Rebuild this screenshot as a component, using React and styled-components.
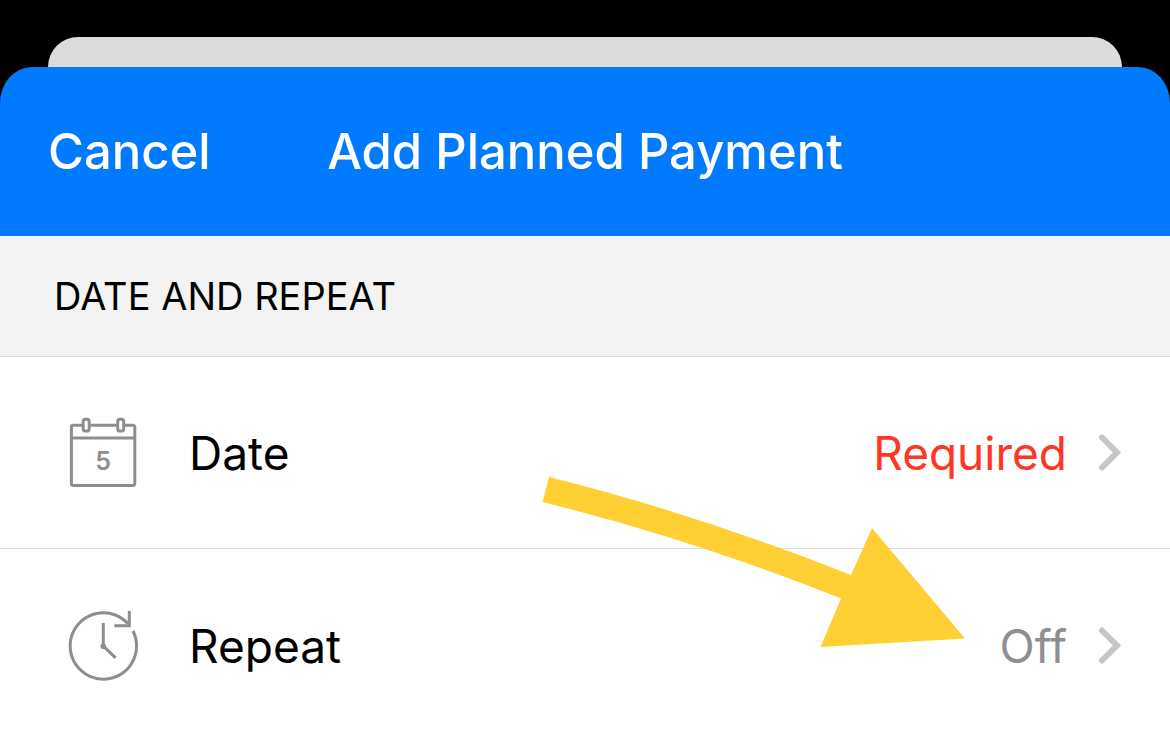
import React from "react";
import styled, { createGlobalStyle } from "styled-components";

const GlobalStyle = createGlobalStyle`
  * { box-sizing: border-box; }
  body {
    margin: 0;
    background: #fff;
    font-family: Inter, "Liberation Sans", sans-serif;
  }
  button { font: inherit; border: 0; background: none; cursor: pointer; }
`;

const Screen = styled.main`
  display: flex;
  flex-direction: column;
  overflow: hidden;
`;

const Backdrop = styled.div`
  background: #000;
  padding-top: 37px;
`;

const SheetBehind = styled.div`
  height: 30px;
  margin: 0 48px;
  background: #dcdcdc;
  border-radius: 30px 30px 0 0;
`;

const NavBar = styled.header`
  display: grid;
  grid-template-columns: 1fr auto 1fr;
  align-items: center;
  padding: 53px 48px 52px;
  background: #007aff;
  color: #fff;
  border-radius: 32px 32px 0 0 / 36px 36px 0 0;
  line-height: 64px;
`;

const NavButton = styled.button`
  justify-self: start;
  padding: 0;
  color: inherit;
  font-size: 49px;
  font-weight: 500;
  line-height: inherit;
`;

const Title = styled.h1`
  margin: 0;
  font-size: 49px;
  font-weight: 500;
  white-space: nowrap;
`;

const SectionTitle = styled.h2`
  margin: 0;
  padding: 36px 54px;
  background: #f3f3f3;
  border-bottom: 1px solid #d9d9db;
  font-size: 38px;
  font-weight: 400;
  line-height: 48px;
  color: #000;
`;

const Rows = styled.div`
  position: relative;
`;

const Row = styled.button`
  display: flex;
  align-items: center;
  width: 100%;
  padding: ${(p) => (p.$last ? "61px 49px 55px 67px" : "60px 49px 59px 67px")};
  border-bottom: ${(p) => (p.$last ? "0" : "1px solid #dedee0")};
  font-size: 46px;
  line-height: 72px;
  text-align: left;
  color: #000;
`;

const RowIcon = styled.svg`
  flex: none;
  width: 72px;
  height: 72px;
  margin-right: 50px;
  overflow: visible;
  fill: none;
  stroke: #8e8e91;
  stroke-width: 3;
`;

const RowLabel = styled.span`
  flex: 1;
`;

const RowValue = styled.span`
  margin-right: 30px;
  color: ${(p) => (p.$required ? "#ff3624" : "#8e8e93")};
`;

const ChevronIcon = styled.svg`
  flex: none;
  width: 24px;
  height: 40px;
  fill: none;
  stroke: #c6c6c8;
  stroke-width: 6;
  stroke-linecap: round;
`;

const Pointer = styled.svg`
  position: absolute;
  top: 120px;
  right: 204px;
  width: 424px;
  height: 172px;
  fill: #ffd034;
  pointer-events: none;
`;

const CalendarIcon = () => (
  <RowIcon viewBox="0 0 72 72" aria-hidden="true">
    <path d="M15.5 8.3H6.2a1.8 1.8 0 0 0-1.8 1.8V66.7a1.8 1.8 0 0 0 1.8 1.8H66a1.8 1.8 0 0 0 1.8-1.8V10.1A1.8 1.8 0 0 0 66 8.3H57M50.5 8.3H22.5M4.4 21H67.8" />
    <rect x="16.2" y="2.3" width="6" height="11.8" rx="2.4" />
    <rect x="50.7" y="2.3" width="6" height="11.8" rx="2.4" />
    <text x="36" y="53" textAnchor="middle" fontSize="25" fontWeight="600" fill="#8e8e91" stroke="none">
      5
    </text>
  </RowIcon>
);

const RepeatIcon = () => (
  <RowIcon viewBox="0 1 72 72" aria-hidden="true">
    <path d="M66 22A33.2 33.2 0 1 1 61 14.7" />
    <path d="M62.3 2V16.7H47.3" />
    <path d="M36.3 14V37L48.6 48.8" />
    <circle cx="36.3" cy="37.3" r="2.8" fill="#8e8e91" stroke="none" />
  </RowIcon>
);

const Chevron = () => (
  <ChevronIcon viewBox="0 0 24 40" aria-hidden="true">
    <path d="M5 4.5L20 19.5L5 34.5" />
  </ChevronIcon>
);

export default function App() {
  return (
    <Screen>
      <GlobalStyle />
      <Backdrop>
        <SheetBehind />
        <NavBar>
          <NavButton type="button">Cancel</NavButton>
          <Title>Add Planned Payment</Title>
        </NavBar>
      </Backdrop>
      <SectionTitle>DATE AND REPEAT</SectionTitle>
      <Rows>
        <Row type="button">
          <CalendarIcon />
          <RowLabel>Date</RowLabel>
          <RowValue $required>Required</RowValue>
          <Chevron />
        </Row>
        <Row type="button" $last>
          <RepeatIcon />
          <RowLabel>Repeat</RowLabel>
          <RowValue>Off</RowValue>
          <Chevron />
        </Row>
        <Pointer viewBox="0 0 424 172" aria-hidden="true">
          <path d="M7 0Q155 37 309 98L330 51L423 161.5L278.5 170L299 121.5Q150 62 0.5 25Z" />
        </Pointer>
      </Rows>
    </Screen>
  );
}
